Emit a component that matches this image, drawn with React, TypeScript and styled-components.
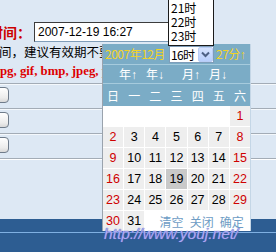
import React from "react";
import styled, { createGlobalStyle } from "styled-components";

const Global = createGlobalStyle`
  html, body { margin: 0; padding: 0; background: #dde8f4; }
  body { width: 276px; height: 252px; overflow: hidden; font-family: "Noto Sans CJK SC", sans-serif; }
`;

const Page = styled.div`
  position: relative;
  width: 276px;
  height: 252px;
  overflow: hidden;
  background: #dde8f4;
  display: flex;
  flex-direction: column;
`;

const Form = styled.div`
  flex: 1;
  display: flex;
  flex-direction: column;
  padding-top: 22px;
`;

const FieldRow = styled.div`
  display: flex;
  align-items: center;
  height: 20px;
  gap: 3px;
  margin-left: -11px;
`;

const Label = styled.span`
  font: bold 14px "Noto Sans CJK SC", sans-serif;
  color: #cc0000;
  line-height: 20px;
  white-space: nowrap;
`;

const DateInput = styled.div`
  width: 152px;
  height: 20px;
  box-sizing: border-box;
  background: #fff;
  border: 1px solid #7f9db9;
  border-top-color: #3c3c3c;
  border-left-color: #3c3c3c;
  font: 12px "Liberation Sans", sans-serif;
  color: #000;
  padding-left: 3px;
  display: flex;
  align-items: center;
  white-space: nowrap;
`;

const Hint = styled.div`
  height: 13px;
  line-height: 13px;
  font: 12.5px "Noto Sans CJK SC", sans-serif;
  color: #000;
  margin-left: -1px;
  white-space: nowrap;
`;

const Ext = styled.div`
  margin-top: 9px;
  height: 14px;
  line-height: 14px;
  font: bold 12.8px "Liberation Serif", serif;
  color: #dd0000;
  white-space: nowrap;
`;

const Rows = styled.div`
  margin-top: 5px;
  border-bottom: 1px solid #a3acb6;
  box-shadow: 0 1px 0 #ffffff;
`;

const Row = styled.div`
  height: 24px;
  border-top: 1px solid #a3acb6;
  box-shadow: inset 0 1px 0 #f4f8fc;
  display: flex;
  align-items: flex-start;
`;

const Button = styled.div`
  margin-top: 3px;
  margin-left: -20px;
  width: 29px;
  height: 16px;
  box-sizing: border-box;
  border: 1px solid #6f7c8b;
  border-radius: 4px;
  background: linear-gradient(#ffffff, #ececec 70%, #d8d8d8);
`;

const Footer = styled.div`
  height: 33px;
  background: #2d5d92;
  display: flex;
  flex-direction: column;
`;

const FooterLine = styled.div`
  margin-top: 13px;
  height: 1px;
  background: #7fb0e2;
`;

/* ---------- Calendar popup ---------- */

const Calendar = styled.div`
  position: absolute;
  left: 102px;
  top: 44px;
  width: 149px;
  box-sizing: border-box;
  border-left: 1px solid #9aa3ad;
  border-right: 1px solid #c4d6e6;
  background: #ffffff;
  z-index: 2;
  font-family: "Noto Sans CJK SC", sans-serif;
`;

const HeadRow = styled.div`
  height: 20px;
  background: #7bacc6;
  display: flex;
  align-items: center;
  padding-left: 2px;
  border-bottom: 1px solid #a6cbdd;
`;

const Gold = styled.span`
  font-size: 12px;
  letter-spacing: -0.5px;
  color: #f2d326;
  white-space: nowrap;
  line-height: 20px;
`;

const Arrow = styled.span`
  font-family: "Liberation Sans", "DejaVu Sans", sans-serif;
  letter-spacing: 0;
`;

const Select = styled.div`
  position: relative;
  flex-shrink: 0;
  margin: 0 2px 0 4px;
  width: 45px;
  height: 17px;
  box-sizing: border-box;
  background: #fff;
  border: 1px solid #7f9db9;
  display: flex;
  align-items: center;
  justify-content: space-between;
  font-size: 12px;
  color: #000;
  padding-left: 1px;
`;

const SelectValue = styled.span`
  white-space: nowrap;
  letter-spacing: -0.6px;
  line-height: 15px;
`;

const DropBtn = styled.div`
  flex-shrink: 0;
  width: 15px;
  height: 15px;
  box-sizing: border-box;
  border: 1px solid #b9cdf5;
  border-radius: 2px;
  background: linear-gradient(#d6e3fe, #b9cffc);
  display: flex;
  align-items: center;
  justify-content: center;
`;

const OptionList = styled.div`
  position: absolute;
  left: -2px;
  bottom: calc(100% + 1px);
  width: 46px;
  height: 46px;
  box-sizing: border-box;
  background: #fff;
  border: 1px solid #1a1a1a;
  border-top: none;
  padding-top: 1px;
  display: flex;
  flex-direction: column;
  overflow: hidden;
`;

const Option = styled.div`
  height: 14px;
  line-height: 14px;
  padding-left: 2px;
  font-size: 12px;
  color: #000;
  white-space: nowrap;
`;

const NavRow = styled.div`
  height: 18px;
  background: #7bacc6;
  border-bottom: 1px solid #a6cbdd;
  display: flex;
  align-items: center;
  padding-left: 16px;
  gap: 18px;
`;

const NavGroup = styled.div`
  display: flex;
  gap: 9px;
`;

const NavItem = styled.span`
  font-size: 12px;
  color: #ffffff;
  line-height: 18px;
  white-space: nowrap;
`;

const WeekRow = styled.div`
  height: 22px;
  background: #7bacc6;
  display: grid;
  grid-template-columns: repeat(7, 1fr);
  column-gap: 1px;
  align-items: center;
`;

const WeekDay = styled.span`
  font-size: 12px;
  color: #ffffff;
  text-align: center;
`;

const Grid = styled.div`
  display: grid;
  grid-template-columns: repeat(7, 1fr);
  grid-auto-rows: 20px;
  gap: 1px;
  background: #ffffff;
`;

const Cell = styled.div<{ $red?: boolean; $today?: boolean; $empty?: boolean }>`
  display: flex;
  align-items: center;
  justify-content: center;
  font: 12.5px "Liberation Sans", sans-serif;
  color: ${(p) => (p.$red ? "#cf0000" : "#000")};
  background: ${(p) => (p.$empty ? "#ffffff" : p.$today ? "#c9c9c9" : "#eeeeee")};
`;

const Actions = styled.div`
  grid-column: span 5;
  display: flex;
  align-items: center;
  justify-content: center;
  gap: 6px;
  padding-left: 8px;
  font-size: 12px;
  color: #6d9cc4;
  background: #ffffff;
`;

const Watermark = styled.div`
  position: absolute;
  left: 104px;
  top: 225px;
  z-index: 3;
  font: italic 15.5px "Liberation Sans", sans-serif;
  color: #aeaaf0;
  text-shadow: 0 0 1px #5a66c4, 0 0 1px #5a66c4;
  white-space: nowrap;
`;

const Chevron = () => (
  <svg width="9" height="7" viewBox="0 0 9 7">
    <path d="M1 1.5 L4.5 5 L8 1.5" fill="none" stroke="#4d6185" strokeWidth="2" />
  </svg>
);

const weekdays = ["日", "一", "二", "三", "四", "五", "六"];

export default function App() {
  const cells: React.ReactNode[] = [];
  for (let i = 0; i < 6; i++) cells.push(<Cell key={"e" + i} $empty />);
  for (let d = 1; d <= 31; d++) {
    const col = (d + 5) % 7;
    cells.push(
      <Cell key={d} $red={col === 0 || col === 6} $today={d === 19}>
        {d}
      </Cell>
    );
  }

  return (
    <Page>
      <Global />
      <Form>
        <FieldRow>
          <Label>时间：</Label>
          <DateInput>2007-12-19 16:27</DateInput>
        </FieldRow>
        <Hint>间，建议有效期不要超过</Hint>
        <Ext>pg, gif, bmp, jpeg, png</Ext>
        <Rows>
          <Row><Button /></Row>
          <Row><Button /></Row>
          <Row><Button /></Row>
        </Rows>
      </Form>
      <Footer>
        <FooterLine />
      </Footer>

      <Calendar>
        <HeadRow>
          <Gold>2007年12月</Gold>
          <Select>
            <SelectValue>16时</SelectValue>
            <DropBtn><Chevron /></DropBtn>
            <OptionList>
              <Option>21时</Option>
              <Option>22时</Option>
              <Option>23时</Option>
            </OptionList>
          </Select>
          <Gold>27分<Arrow>↑</Arrow></Gold>
        </HeadRow>
        <NavRow>
          <NavGroup>
            <NavItem>年<Arrow>↑</Arrow></NavItem>
            <NavItem>年<Arrow>↓</Arrow></NavItem>
          </NavGroup>
          <NavGroup>
            <NavItem>月<Arrow>↑</Arrow></NavItem>
            <NavItem>月<Arrow>↓</Arrow></NavItem>
          </NavGroup>
        </NavRow>
        <WeekRow>
          {weekdays.map((w) => (
            <WeekDay key={w}>{w}</WeekDay>
          ))}
        </WeekRow>
        <Grid>
          {cells}
          <Actions>
            <span>清空</span>
            <span>关闭</span>
            <span>确定</span>
          </Actions>
        </Grid>
      </Calendar>
      <Watermark>http://www.youj.net/</Watermark>
    </Page>
  );
}
